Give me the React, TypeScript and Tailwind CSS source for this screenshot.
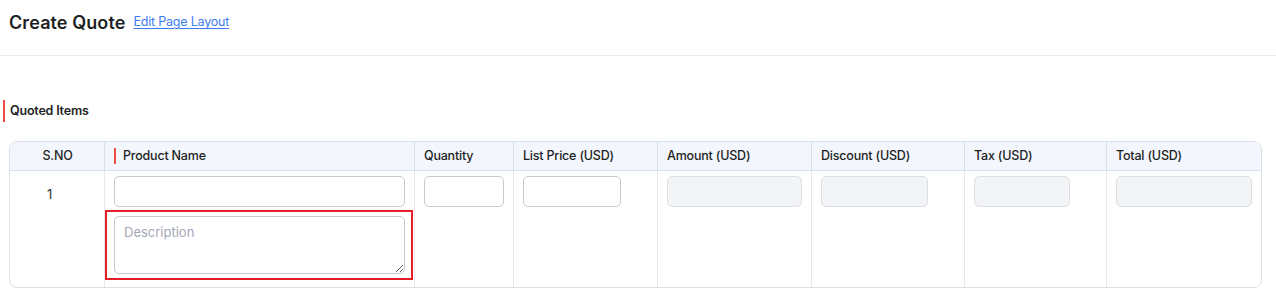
import React from 'react';

const font = { fontFamily: 'Inter, "Noto Sans", sans-serif' };

interface Column {
  label: string;
  inputWidth: string;
  disabled?: boolean;
}

const columns: Column[] = [
  { label: 'Quantity', inputWidth: 'w-[80px]' },
  { label: 'List Price (USD)', inputWidth: 'w-[98px]' },
  { label: 'Amount (USD)', inputWidth: 'w-[135px]', disabled: true },
  { label: 'Discount (USD)', inputWidth: 'w-[107px]', disabled: true },
  { label: 'Tax (USD)', inputWidth: 'w-[96px]', disabled: true },
  { label: 'Total (USD)', inputWidth: 'w-[136px]', disabled: true },
];

const gridCols = 'grid grid-cols-[94px_310px_99px_144px_154px_153px_142px_155px]';

const App: React.FC = () => {
  return (
    <div className="w-[1276px] h-[302px] bg-white text-[#1d1f24]" style={font}>
      {/* page header */}
      <div className="flex items-center h-[56px] pl-[9px] pb-[10px] border-b border-[#ececee]">
        <h1 className="text-[18px] font-semibold tracking-[0.1px]">Create Quote</h1>
        <a href="#" className="ml-[8px] text-[12.5px] text-[#3d7cf2] underline underline-offset-2 tracking-[-0.2px]">
          Edit Page Layout
        </a>
      </div>

      {/* section */}
      <div className="flex items-center mt-[44px] h-[22px] pl-[3px]">
        <span className="w-[2px] h-[22px] bg-[#ef4a4a]" />
        <span className="ml-[5px] text-[12.5px] font-semibold tracking-[-0.2px]">Quoted Items</span>
      </div>

      <div className="ml-[9px] mt-[19px] w-[1253px] border border-[#dbe1ea] rounded-[8px] overflow-hidden">
        {/* header */}
        <div className={`${gridCols} h-[29px] bg-[#f3f6fd] border-b border-[#dbe1ea] text-[12.5px] font-medium tracking-[-0.2px]`}>
          <div className="flex items-center justify-center pl-[1px]">S.NO</div>
          <div className="flex items-center border-l border-[#dbe1ea] pl-[9px]">
            <span className="w-[2px] h-[16px] bg-[#ef4a4a] mr-[7px]" />
            Product Name
          </div>
          {columns.map((c) => (
            <div key={c.label} className="flex items-center border-l border-[#dbe1ea] pl-[9px]">
              {c.label}
            </div>
          ))}
        </div>

        {/* row */}
        <div className={`${gridCols} h-[116px]`}>
          <div className="pl-[37px] pt-[14px] text-[13px] text-[#333]">1</div>
          <div className="border-l border-[#e8e9ec] pt-[5px] pl-[9px]">
            <input className="block w-[291px] h-[31px] border border-[#c6c9ce] rounded-[5px] bg-white outline-none" />
            <div className="mt-[3px] -ml-[9px] w-[308px] h-[70px] border-2 border-[#e61e28] pt-[4px] pl-[7px]">
              <textarea
                placeholder="Description"
                className="block w-[291px] h-[58px] border border-[#c6c9ce] rounded-[5px] px-[9px] py-[6px] text-[13px] placeholder:text-[#a3a8b5] outline-none"
              />
            </div>
          </div>
          {columns.map((c) => (
            <div key={c.label} className="border-l border-[#e8e9ec] pt-[5px] pl-[9px]">
              <input
                disabled={c.disabled}
                className={`block ${c.inputWidth} h-[31px] border rounded-[5px] outline-none ${
                  c.disabled ? 'bg-[#f3f4f6] border-[#dcdfe4]' : 'bg-white border-[#c6c9ce]'
                }`}
              />
            </div>
          ))}
        </div>
      </div>
    </div>
  );
};

export default App;
